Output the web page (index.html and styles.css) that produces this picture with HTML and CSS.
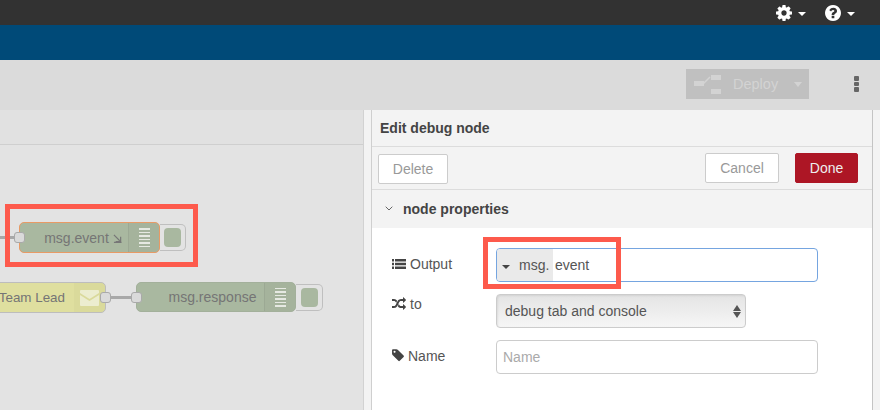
FILE: index.html
```html
<!DOCTYPE html>
<html lang="en">
<head>
<meta charset="utf-8">
<title>Edit debug node</title>
<link rel="stylesheet" href="styles.css">
</head>
<body>
<div class="page">
  <header class="topbar">
    <span class="top-item">
      <svg class="top-icon" viewBox="128 128 1536 1536"><path d="M1152 896q0-106-75-181t-181-75-181 75-75 181 75 181 181 75 181-75 75-181zm512-109v222q0 12-8 23t-20 13l-185 28q-19 54-39 91 35 50 107 138 10 12 10 25t-9 23q-27 37-99 108t-94 71q-12 0-26-9l-138-108q-44 23-91 38-16 136-29 186-7 28-36 28h-222q-14 0-24.5-8.5t-11.5-21.5l-28-184q-49-16-90-37l-141 107q-10 9-25 9-14 0-25-11-126-114-165-168-7-10-7-23 0-12 8-23 15-21 51-66.5t54-70.5q-27-50-41-99l-183-27q-13-2-21-12.5t-8-23.5v-222q0-12 8-23t19-13l186-28q14-46 39-92-40-57-107-138-10-12-10-24 0-10 9-23 26-36 98.5-107.5t94.5-71.5q13 0 26 10l138 107q44-23 91-38 16-136 29-186 7-28 36-28h222q14 0 24.5 8.5t11.5 21.5l28 184q49 16 90 37l142-107q9-9 24-9 13 0 25 10 129 119 165 170 7 8 7 22 0 12-8 23-15 21-51 66.5t-54 70.5q26 50 41 98l183 28q13 2 21 12.5t8 23.5z"/></svg>
      <i class="caret caret-white"></i>
    </span>
    <span class="top-item">
      <svg class="top-icon" viewBox="128 128 1536 1536"><path d="M1024 1376v-192q0-14-9-23t-23-9h-192q-14 0-23 9t-9 23v192q0 14 9 23t23 9h192q14 0 23-9t9-23zm256-672q0-88-55.5-163t-138.5-116-170-41q-243 0-371 213-15 24 8 42l132 100q7 6 19 6 16 0 25-12 53-68 86-92 34-24 86-24 48 0 85.5 26t37.5 59q0 38-20 61t-68 45q-63 28-115.5 86.5t-52.5 125.5v36q0 14 9 23t23 9h192q14 0 23-9t9-23q0-19 21.5-49.5t54.5-49.5q32-18 49-28.5t46-35 44.5-48 28-60.5 12.5-81zm384 192q0 209-103 385.5t-279.5 279.5-385.5 103-385.5-103-279.5-279.5-103-385.5 103-385.5 279.5-279.5 385.5-103 385.5 103 279.5 279.5 103 385.5z"/></svg>
      <i class="caret caret-white"></i>
    </span>
  </header>
  <div class="blueband"></div>
  <div class="toolbar">
    <div class="deploy">
      <svg class="deploy-icon" viewBox="0 0 27 19"><path d="M0 6h10v5H0zM17 0h10v5H17zM17 14h10v5H17z"/><path d="M9 9l7-7" fill="none" stroke="#d3d3d3" stroke-width="1.5"/></svg>
      <span class="deploy-label">Deploy</span>
      <i class="caret caret-deploy"></i>
    </div>
    <div class="dots"><i></i><i></i><i></i></div>
  </div>
  <main class="main">
    <section class="canvas">
      <div class="tabs"></div>

      <div class="wire wire-a"></div>
      <div class="wire wire-b"></div>

      <div class="node node-event">
        <span class="node-text">msg.event <svg class="arrow" viewBox="0 0 10 10"><path d="M1 1l6.500 6.500M8.500 3v5.500H3M1 9.300h8.500" fill="none" stroke="#777" stroke-width="1.300"/></svg></span>
        <span class="node-icon"><i></i><i></i><i></i><i></i><i></i><i></i></span>
      </div>
      <span class="port port-event"></span>
      <div class="node-btn btn-event"><i></i></div>

      <div class="node node-lead">
        <span class="node-text">Team Lead</span>
        <span class="node-icon lead-icon">
          <svg class="envelope" viewBox="0 0 19 16"><path d="M1 0h17a1 1 0 0 1 1 1v2L9.500 9 0 3V1a1 1 0 0 1 1-1zM0 5l9.500 6L19 5v10a1 1 0 0 1-1 1H1a1 1 0 0 1-1-1z"/></svg>
        </span>
      </div>
      <span class="port port-lead"></span>

      <div class="node node-response">
        <span class="node-text">msg.response</span>
        <span class="node-icon"><i></i><i></i><i></i><i></i><i></i><i></i></span>
      </div>
      <span class="port port-response"></span>
      <div class="node-btn btn-response"><i></i></div>
    </section>

    <div class="gutter"></div>

    <section class="dialog">
      <h2 class="dialog-title">Edit debug node</h2>
      <div class="dialog-actions">
        <button class="btn">Delete</button>
        <span class="spacer"></span>
        <button class="btn btn-cancel">Cancel</button>
        <button class="btn btn-done">Done</button>
      </div>
      <div class="section-head">
        <svg class="chevron" viewBox="0 0 8 5"><path d="M.7.7L4 4l3.300-3.300" fill="none" stroke="#666" stroke-width="1"/></svg>
        <span>node properties</span>
      </div>
      <div class="form">
        <div class="row row-output">
          <label class="label">
            <svg class="label-icon list-icon" viewBox="0 512 1792 1024" preserveAspectRatio="none"><path d="M256 1312v192q0 13-9.500 22.500T224 1536H32q-13 0-22.500-9.500T0 1504v-192q0-13 9.500-22.500T32 1280h192q13 0 22.500 9.500t9.500 22.500zm0-384v192q0 13-9.500 22.500T224 1152H32q-13 0-22.500-9.500T0 1120V928q0-13 9.500-22.500T32 896h192q13 0 22.500 9.500T256 928zm0-384v192q0 13-9.500 22.500T224 768H32q-13 0-22.500-9.500T0 736V544q0-13 9.500-22.500T32 512h192q13 0 22.500 9.500T256 544zm1536 768v192q0 13-9.500 22.500t-22.500 9.500H416q-13 0-22.500-9.500T384 1504v-192q0-13 9.500-22.500t22.500-9.500h1344q13 0 22.500 9.500t9.500 22.500zm0-384v192q0 13-9.500 22.500t-22.500 9.500H416q-13 0-22.500-9.500T384 1120V928q0-13 9.500-22.500T416 896h1344q13 0 22.500 9.500t9.500 22.500zm0-384v192q0 13-9.500 22.500T1760 768H416q-13 0-22.500-9.500T384 736V544q0-13 9.500-22.500T416 512h1344q13 0 22.500 9.500t9.500 22.500z"/></svg>
            Output
          </label>
          <div class="typed">
            <span class="typed-type"><i class="caret caret-dark"></i>msg.</span>
            <span class="typed-value">event</span>
          </div>
        </div>
        <div class="row row-to">
          <label class="label">
            <svg class="label-icon" viewBox="0 128 1792 1536"><path d="M666 481q-60 92-137 273-22-45-37-72.500t-40.500-63.500-51-56.500-63-35-81.500-14.500h-224q-14 0-23-9t-9-23v-192q0-14 9-23t23-9h224q250 0 410 225zm1126 799q0 14-9 23l-320 320q-9 9-23 9-13 0-22.500-9.500t-9.500-22.500v-192q-32 0-85 .5t-81 1-73-1-71-5-64-10.500-63-18.500-58-28.500-59-40-55-53.500-56-69.500q59-93 136-273 22 45 37 72.500t40.500 63.500 51 56.500 63 35 81.500 14.500h256v-192q0-14 9-23t23-9q12 0 24 10l319 319q9 9 9 23zm0-896q0 14-9 23l-320 320q-9 9-23 9-13 0-22.500-9.500t-9.500-22.500v-192h-256q-48 0-87 15t-69 45-51 61.500-45 77.500q-32 62-78 171-29 66-49.500 111t-54 105-64 100-74 83-90 68.500-106.500 42-128 16.500h-224q-14 0-23-9t-9-23v-192q0-14 9-23t23-9h224q48 0 87-15t69-45 51-61.500 45-77.500q32-62 78-171 29-66 49.500-111t54-105 64-100 74-83 90-68.500 106.500-42 128-16.500h256v-192q0-14 9-23t23-9q12 0 24 10l319 319q9 9 9 23z"/></svg>
            to
          </label>
          <div class="select">
            <span>debug tab and console</span>
            <span class="select-arrows"><i class="up"></i><i class="down"></i></span>
          </div>
        </div>
        <div class="row row-name">
          <label class="label">
            <svg class="label-icon tag" viewBox="0 0 1664 1792"><path d="M576 448q0-53-37.500-90.500T448 320t-90.500 37.500T320 448t37.500 90.500T448 576t90.500-37.500T576 448zm1067 576q0 53-37 90l-491 492q-39 37-91 37-53 0-90-37l-715-716q-38-37-64.500-101T123 672V256q0-52 38-90t90-38h416q53 0 117 26.500t102 64.500l715 714q37 39 37 91z" transform="translate(-120 -90)"/></svg>
            Name
          </label>
          <input class="text-input" type="text" placeholder="Name">
        </div>
      </div>
    </section>

    <div class="edge"></div>

    <div class="highlight hl-node"></div>
    <div class="highlight hl-output"></div>
  </main>
</div>
</body>
</html>
```

FILE: styles.css
```css
* { box-sizing: border-box; }
html, body { margin: 0; padding: 0; }
body {
  font-family: "Liberation Sans", Arial, sans-serif;
  font-size: 14px;
  color: #555;
  background: #fff;
}
.page {
  width: 880px;
  height: 410px;
  overflow: hidden;
  display: flex;
  flex-direction: column;
}

/* header */
.topbar {
  height: 25px;
  flex: none;
  background: #323232;
  display: flex;
  justify-content: flex-end;
  align-items: center;
  padding-right: 25px;
  gap: 19px;
}
.top-item { display: flex; align-items: center; gap: 6px; }
.top-icon { width: 16px; height: 16px; fill: #fff; display: block; }
.caret {
  display: inline-block;
  width: 0;
  height: 0;
  border-left: 4px solid transparent;
  border-right: 4px solid transparent;
  border-top: 4px solid #fff;
}
.caret-white { margin-top: 2px; }
.blueband { height: 35px; flex: none; background: #004a78; }

/* toolbar */
.toolbar {
  height: 50px;
  flex: none;
  background: #dbdbdb;
  display: flex;
  align-items: center;
  justify-content: flex-end;
  padding-right: 21px;
  gap: 45px;
}
.deploy {
  width: 123px;
  height: 30px;
  margin-top: -2px;
  background: #c0c0c0;
  color: #d3d3d3;
  display: flex;
  align-items: center;
  padding-left: 8px;
}
.deploy-icon { width: 27px; height: 19px; fill: #d3d3d3; flex: none; }
.deploy-label { margin-left: 12px; font-size: 14.500px; }
.caret-deploy { margin-left: 16px; border-top-color: #d3d3d3; border-left-width: 4.500px; border-right-width: 4.500px; border-top-width: 5px; }
.dots { display: flex; flex-direction: column; gap: 1px; margin-top: -2px; }
.dots i { width: 5px; height: 4.500px; background: #666; border-radius: 1px; display: block; }

/* main */
.main { flex: 1; display: flex; position: relative; min-height: 0; }
.canvas {
  width: 364px;
  flex: none;
  position: relative;
  background: #e3e3e3;
  border-right: 1px solid #d2d2d2;
}
.tabs { height: 35px; border-bottom: 1px solid #cfcfcf; background: #e1e1e1; }
.gutter { width: 7px; flex: none; background: #f3f3f3; }
.edge { width: 7px; flex: none; background: #f3f3f3; }

/* flow nodes, placed on the free canvas */
.node {
  position: absolute;
  display: flex;
  border-radius: 5px;
  color: #757575;
  overflow: hidden;
}
.node-text { flex: 1; display: flex; align-items: center; justify-content: center; white-space: nowrap; }
.node-icon {
  width: 31px;
  flex: none;
  background: rgba(0,0,0,.025);
  border-left: 1px solid rgba(0,0,0,.05);
  display: flex;
  flex-direction: column;
  align-items: center;
  justify-content: center;
  gap: 2px;
}
.node-icon i { width: 11px; height: 1.500px; background: #e6e9e2; display: block; }
.node-event {
  left: 19px; top: 112px; width: 141px; height: 31px;
  background: #a9b8a0;
  border: 1.500px solid #e89a65;
}
.node-event .node-text { gap: 4px; padding-left: 18px; }
.arrow { width: 9px; height: 9px; margin-top: 1px; }
.node-response {
  left: 136px; top: 172px; width: 160px; height: 30px;
  background: #a9b8a0;
  border: 1px solid #a3b09b;
}
.node-response .node-text { padding-left: 24px; }
.node-lead {
  left: -30px; top: 172px; width: 136px; height: 31px;
  background: #dfdf9f;
  border: 1px solid #bdbdbd;
}
.node-lead .node-text { justify-content: flex-end; padding-right: 9px; font-size: 13.400px; }
.lead-icon { width: 31px; background: rgba(0,0,0,.02); border-left: 0; }
.envelope { width: 19px; height: 16px; fill: #ecedcf; }
.port {
  position: absolute;
  width: 11px;
  height: 11px;
  background: #dadada;
  border: 1px solid #a9a9a9;
  border-radius: 3px;
}
.port-event { left: 14px; top: 122px; }
.port-lead { left: 100px; top: 182px; }
.port-response { left: 131px; top: 182px; }
.wire { position: absolute; height: 3px; background: #a8a8a8; }
.wire-a { left: 0; top: 126px; width: 15px; }
.wire-b { left: 108px; top: 186px; width: 24px; }
.node-btn {
  position: absolute;
  background: #e3e3e3;
  border: 1px solid #bfbfbf;
  border-left: 0;
  border-radius: 0 5px 5px 0;
  display: flex;
  align-items: center;
}
.node-btn i { width: 17px; height: 19px; background: #a9b8a0; border-radius: 4px; display: block; }
.btn-event { left: 160px; top: 114px; width: 26px; height: 27px; padding-left: 4px; }
.btn-response { left: 296px; top: 174px; width: 27px; height: 27px; padding-left: 5px; }

/* dialog */
.dialog {
  width: 502px;
  flex: none;
  background: #fff;
  border-left: 1px solid #cfcfcf;
  border-right: 1px solid #c4c4c4;
  display: flex;
  flex-direction: column;
}
.dialog-title {
  margin: 0;
  height: 37px;
  background: #f3f3f3;
  border-bottom: 1px solid #dcdcdc;
  padding: 10px 0 0 8px;
  font-size: 14px;
  line-height: 16px;
  font-weight: bold;
  color: #444;
}
.dialog-actions {
  height: 43px;
  background: #f3f3f3;
  border-bottom: 1px solid #dcdcdc;
  display: flex;
  align-items: flex-start;
  padding: 6px 14px 0 6px;
  gap: 16px;
}
.spacer { flex: 1; }
.btn {
  height: 30px;
  width: 70px;
  margin: 0;
  padding: 0;
  background: #fff;
  border: 1px solid #ccc;
  border-radius: 2px;
  font: 14px "Liberation Sans", Arial, sans-serif;
  color: #999;
}
.btn:first-child { margin-top: 1px; }
.btn-cancel { width: 74px; }
.btn-done { width: 63px; background: #ad1625; border-color: #ad1625; color: #eee; }
.section-head {
  height: 38px;
  background: #f3f3f3;
  display: flex;
  align-items: center;
  padding-left: 13px;
  padding-bottom: 1px;
  gap: 10px;
  font-weight: bold;
  color: #444;
}
.chevron { width: 8px; height: 5px; }
.form { flex: 1; padding-top: 20px; display: flex; flex-direction: column; }
.row { display: flex; align-items: flex-start; padding-left: 20px; }
.row-to { margin-top: 12px; }
.row-name { margin-top: 12px; }
.label {
  width: 104px;
  flex: none;
  display: flex;
  align-items: center;
  gap: 4px;
  height: 17px;
  margin-top: 7px;
  color: #555;
}
.row-to .label { margin-top: 1px; }
.label-icon { width: 14px; height: 14px; fill: #444; flex: none; }
.list-icon { height: 10px; }
.tag { width: 13px; gap: 3px; margin-right: -1px; }
.typed {
  width: 322px;
  height: 34px;
  background: #fff;
  border: 1px solid #75a5e0;
  border-radius: 4px;
  display: flex;
  align-items: stretch;
  overflow: hidden;
}
.typed-type {
  width: 56px;
  background: #eaeaea;
  display: flex;
  align-items: center;
  padding-left: 5px;
  gap: 9px;
  color: #555;
}
.caret-dark { border-top-color: #444; margin-top: 3px; }
.typed-value { display: flex; align-items: center; color: #555; padding-left: 2px; }
.select {
  width: 250px;
  height: 34px;
  border: 1px solid #ccc;
  border-radius: 4px;
  background: linear-gradient(#e4e4e4, #f6f6f6);
  box-shadow: inset 1px 1px 2px rgba(0,0,0,.08);
  display: flex;
  align-items: center;
  justify-content: space-between;
  padding: 0 4px 0 8px;
  color: #555;
}
.select-arrows { display: flex; flex-direction: column; gap: 1px; }
.select-arrows i { width: 0; height: 0; border-left: 4px solid transparent; border-right: 4px solid transparent; display: block; }
.select-arrows .up { border-bottom: 6px solid #555; }
.select-arrows .down { border-top: 6px solid #555; }
.text-input {
  width: 322px;
  height: 34px;
  border: 1px solid #ccc;
  border-radius: 4px;
  padding: 0 6px;
  font: 14px "Liberation Sans", Arial, sans-serif;
  background: #fff;
}
.text-input::placeholder { color: #aaa; opacity: 1; }

/* annotation frames laid over the screenshot */
.highlight { position: absolute; border: 5px solid #fd5a4c; pointer-events: none; }
.hl-node { left: 5px; top: 94px; width: 193px; height: 63px; }
.hl-output { left: 483px; top: 127px; width: 138px; height: 52px; }
```
